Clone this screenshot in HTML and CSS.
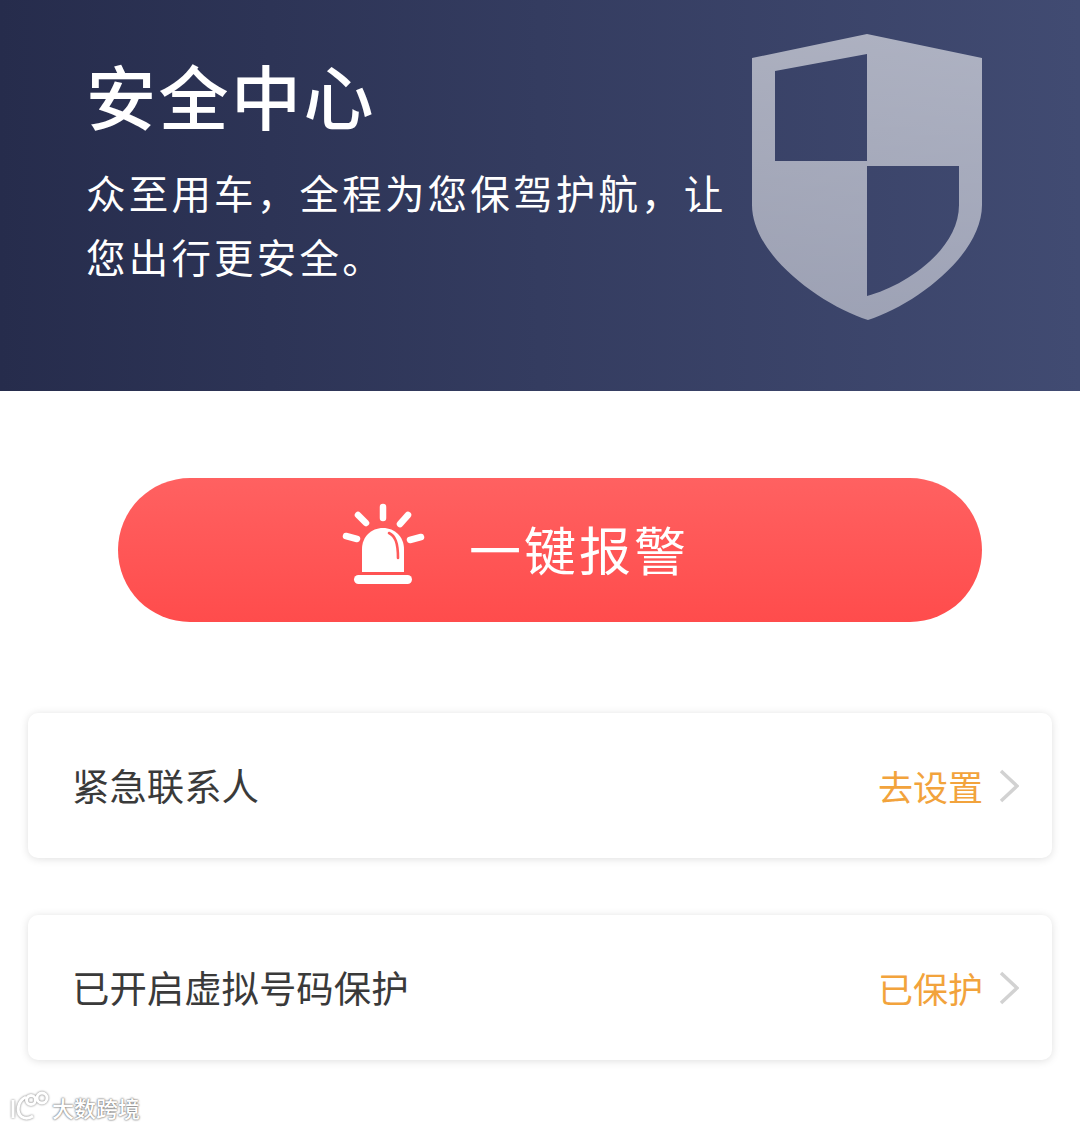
FILE: index.html
```html
<!DOCTYPE html>
<html lang="zh-CN">
<head>
  <meta charset="UTF-8" />
  <title>安全中心</title>
  <link rel="stylesheet" href="styles.css">
</head>
<body>
  <!-- Banner -->
  <header class="banner">
    <div class="banner-text">
      <h1>安全中心</h1>
      <p>众至用车，全程为您保驾护航，让您出行更安全。</p>
    </div>
    <svg class="shield" width="230" height="286" viewBox="752 34 230 286">
      <defs>
        <linearGradient id="shieldFill" x1="0" y1="0" x2="0" y2="1">
          <stop offset="0" stop-color="#fff" stop-opacity="0.58" />
          <stop offset="1" stop-color="#fff" stop-opacity="0.5" />
        </linearGradient>
      </defs>
      <path fill="url(#shieldFill)" fill-rule="evenodd" d="M867 34 L982 58 V205 C982 255 915 305 868 320 C821 305 752 255 752 205 V58 Z M775 71 V161 H867 V54 Z M867 166 V296 C905 286 959 250 959 205 V166 Z" />
    </svg>
  </header>

  <main class="content">
    <button class="alarm">
      <svg class="alarm-icon" width="88" height="88" viewBox="340 500 88 88">
        <g stroke="#fff" stroke-width="6.5" stroke-linecap="round" fill="none">
          <path d="M383 507 V518" />
          <path d="M358 515 L366 523" />
          <path d="M408 515 L400 524" />
          <path d="M346 536 L357 539" />
          <path d="M421 537 L410 540" />
        </g>
        <path fill="#fff" d="M362 572 V549 C362 537 371 528 383 528 C395 528 404 537 404 549 V572 Z" />
        <path fill="none" stroke="#ff5a5a" stroke-width="2.6" stroke-linecap="round" d="M389 533 C395 536 398 542 398 558" />
        <rect x="354" y="575" width="58" height="9" rx="4.5" fill="#fff" />
      </svg>
      <span class="alarm-label">一键报警</span>
    </button>

    <div class="card">
      <span class="card-title">紧急联系人</span>
      <span class="card-status">去设置</span>
      <svg class="chevron" width="20" height="34" viewBox="0 0 20 34"><path d="M2 2 L18 17 L2 32" /></svg>
    </div>
    <div class="card">
      <span class="card-title">已开启虚拟号码保护</span>
      <span class="card-status">已保护</span>
      <svg class="chevron" width="20" height="34" viewBox="0 0 20 34"><path d="M2 2 L18 17 L2 32" /></svg>
    </div>
  </main>

  <!-- Watermark -->
  <div class="watermark">
    <svg width="42" height="32" viewBox="0 0 42 32">
      <g fill="none" stroke="#fff" stroke-width="3">
        <path d="M5 9 V27" />
        <path d="M18 6 C9 10 8 22 14 26 C18 28 22 27 25 25" />
        <circle cx="23" cy="9" r="4.5" />
        <circle cx="34" cy="7" r="5" />
      </g>
    </svg>
    <span>大数跨境</span>
  </div>
</body>
</html>
```

FILE: styles.css
```css
body {
  margin: 0;
  background: #ffffff;
  font-family: "Noto Sans CJK SC", "Noto Sans", sans-serif;
  position: relative;
  height: 1129px;
  overflow: hidden;
}
.banner {
  height: 391px;
  box-sizing: border-box;
  padding: 34px 98px 0 86px;
  display: flex;
  justify-content: space-between;
  align-items: flex-start;
  background: linear-gradient(90deg, #262c4c 0%, #343c60 50%, #414b72 100%);
  color: #fff;
}
.banner-text {
  width: 650px;
}
.banner h1 {
  margin: 19px 0 0;
  font-size: 70px;
  line-height: 84px;
  font-weight: 500;
  letter-spacing: 2.5px;
}
.banner p {
  margin: 23px 0 0;
  font-size: 39.5px;
  line-height: 64px;
  letter-spacing: 3.2px;
  font-weight: 400;
}
.shield {
  flex: none;
}
.content {
  padding: 87px 28px 0;
}
.alarm {
  display: flex;
  align-items: center;
  justify-content: center;
  gap: 41px;
  width: 864px;
  height: 144px;
  margin: 0 0 91px 90px;
  padding: 0 71px 0 0;
  border: none;
  border-radius: 72px;
  background: linear-gradient(180deg, #ff6161 0%, #ff4c4c 100%);
  color: #fff;
  font-family: inherit;
  font-size: 52px;
  letter-spacing: 3px;
  font-weight: 400;
}
.alarm-icon {
  flex: none;
  margin-top: -12px;
}
.alarm-label {
  margin-top: -4px;
}
.card {
  display: flex;
  align-items: center;
  height: 145px;
  box-sizing: border-box;
  padding: 0 33px 0 44px;
  margin-bottom: 57px;
  background: #fff;
  border-radius: 10px;
  box-shadow: 0 1px 8px rgba(0, 0, 0, 0.13);
}
.card-title {
  flex: 1;
  font-size: 37.4px;
  color: #3a3a3a;
  font-weight: 400;
  margin-top: -2px;
}
.card-status {
  font-size: 35px;
  color: #f2a33c;
  font-weight: 400;
}
.chevron {
  margin-left: 16px;
  fill: none;
  stroke: #d2d2d2;
  stroke-width: 3.5;
}
.watermark {
  position: absolute;
  left: 8px;
  top: 1091px;
  display: flex;
  align-items: center;
  gap: 2px;
  color: #fff;
  font-size: 22px;
  font-weight: 500;
  text-shadow: 0 0 2px #777, 0 0 2px #777;
}
.watermark svg {
  filter: drop-shadow(0 0 1px #777);
}
```
